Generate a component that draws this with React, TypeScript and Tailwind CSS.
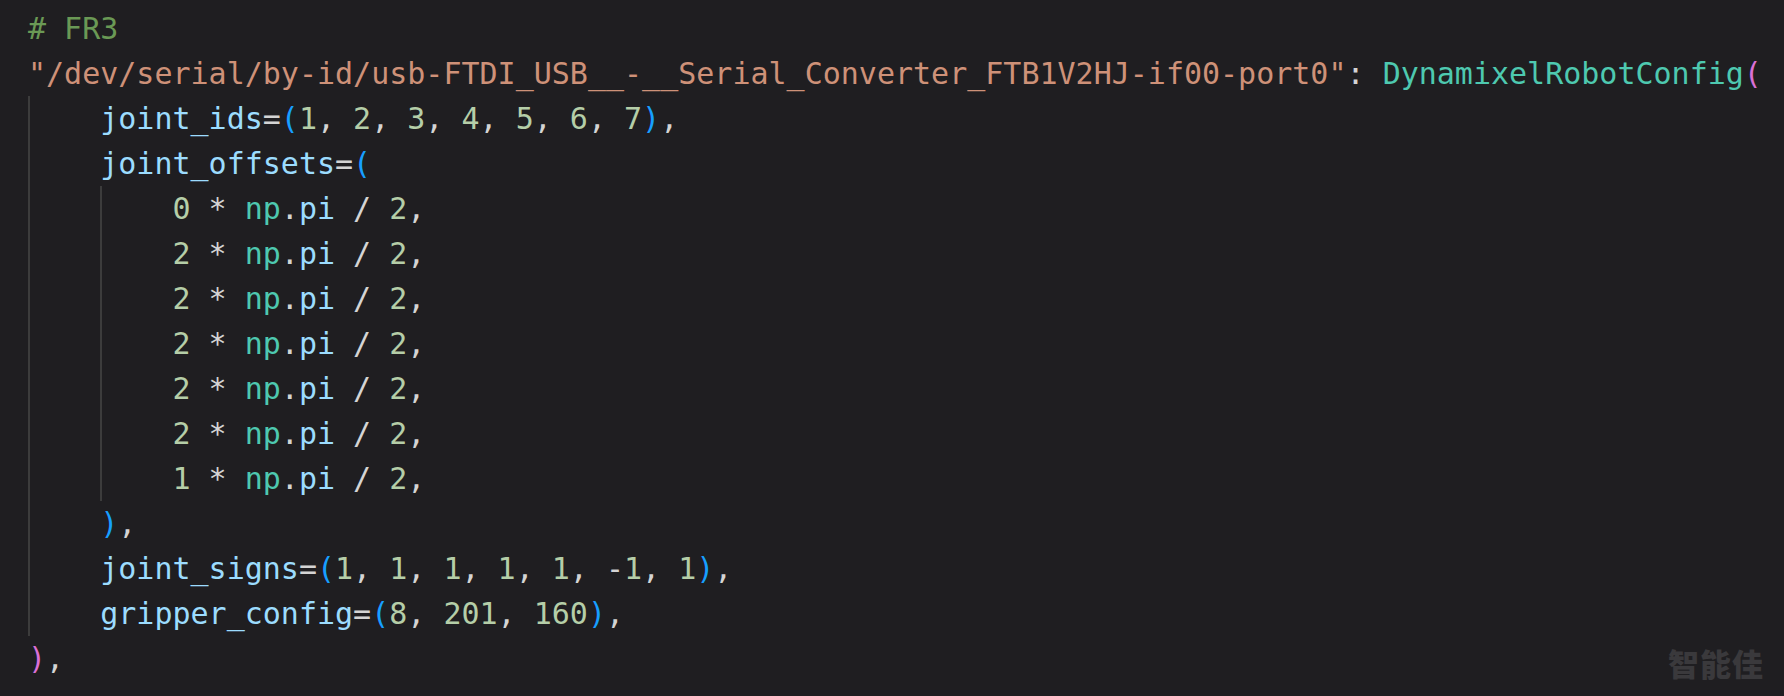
type Tok = [string, string];

const C = {
  txt: "text-[#d4d4d4]",
  com: "text-[#6a9955]",
  str: "text-[#ce9178]",
  cls: "text-[#4ec9b0]",
  par: "text-[#9cdcfe]",
  num: "text-[#b5cea8]",
  b2: "text-[#da70d6]",
  b3: "text-[#179fff]",
};

const offsets = ["0", "2", "2", "2", "2", "2", "1"];

function Guide({ on }: { on: boolean }) {
  return (
    <span
      className={`inline-block h-full w-[4ch] ${on ? "border-l-2 border-[#3c3c3c]" : ""}`}
    />
  );
}

function Line({ guides = 0, tokens }: { guides?: number; tokens: Tok[] }) {
  return (
    <div className="flex h-[45px] items-stretch whitespace-pre">
      {Array.from({ length: guides }).map((_, i) => (
        <Guide key={i} on />
      ))}
      <span className="self-center">
        {tokens.map(([cls, t], i) => (
          <span key={i} className={cls}>
            {t}
          </span>
        ))}
      </span>
    </div>
  );
}

export default function App() {
  return (
    <div className="relative h-[696px] w-[1784px] overflow-hidden bg-[#1f1e21] pl-[28px] pt-[6px] font-['DejaVu_Sans_Mono',monospace] text-[30px] antialiased">
      <Line tokens={[[C.com, "# FR3"]]} />
      <Line
        tokens={[
          [C.str, '"/dev/serial/by-id/usb-FTDI_USB__-__Serial_Converter_FTB1V2HJ-if00-port0"'],
          [C.txt, ": "],
          [C.cls, "DynamixelRobotConfig"],
          [C.b2, "("],
        ]}
      />
      <Line
        guides={1}
        tokens={[
          [C.par, "joint_ids"],
          [C.txt, "="],
          [C.b3, "("],
          [C.num, "1"], [C.txt, ", "],
          [C.num, "2"], [C.txt, ", "],
          [C.num, "3"], [C.txt, ", "],
          [C.num, "4"], [C.txt, ", "],
          [C.num, "5"], [C.txt, ", "],
          [C.num, "6"], [C.txt, ", "],
          [C.num, "7"],
          [C.b3, ")"],
          [C.txt, ","],
        ]}
      />
      <Line
        guides={1}
        tokens={[
          [C.par, "joint_offsets"],
          [C.txt, "="],
          [C.b3, "("],
        ]}
      />
      {offsets.map((n, i) => (
        <Line
          key={i}
          guides={2}
          tokens={[
            [C.num, n],
            [C.txt, " * "],
            [C.cls, "np"],
            [C.txt, "."],
            [C.par, "pi"],
            [C.txt, " / "],
            [C.num, "2"],
            [C.txt, ","],
          ]}
        />
      ))}
      <Line
        guides={1}
        tokens={[
          [C.b3, ")"],
          [C.txt, ","],
        ]}
      />
      <Line
        guides={1}
        tokens={[
          [C.par, "joint_signs"],
          [C.txt, "="],
          [C.b3, "("],
          [C.num, "1"], [C.txt, ", "],
          [C.num, "1"], [C.txt, ", "],
          [C.num, "1"], [C.txt, ", "],
          [C.num, "1"], [C.txt, ", "],
          [C.num, "1"], [C.txt, ", -"],
          [C.num, "1"], [C.txt, ", "],
          [C.num, "1"],
          [C.b3, ")"],
          [C.txt, ","],
        ]}
      />
      <Line
        guides={1}
        tokens={[
          [C.par, "gripper_config"],
          [C.txt, "="],
          [C.b3, "("],
          [C.num, "8"], [C.txt, ", "],
          [C.num, "201"], [C.txt, ", "],
          [C.num, "160"],
          [C.b3, ")"],
          [C.txt, ","],
        ]}
      />
      <Line
        tokens={[
          [C.b2, ")"],
          [C.txt, ","],
        ]}
      />
      <div className="absolute bottom-[18px] right-[20px] font-['Noto_Sans_CJK_SC',sans-serif] text-[31px] font-black leading-none tracking-[1px] text-[#3a393c]">
        智能佳
      </div>
    </div>
  );
}
